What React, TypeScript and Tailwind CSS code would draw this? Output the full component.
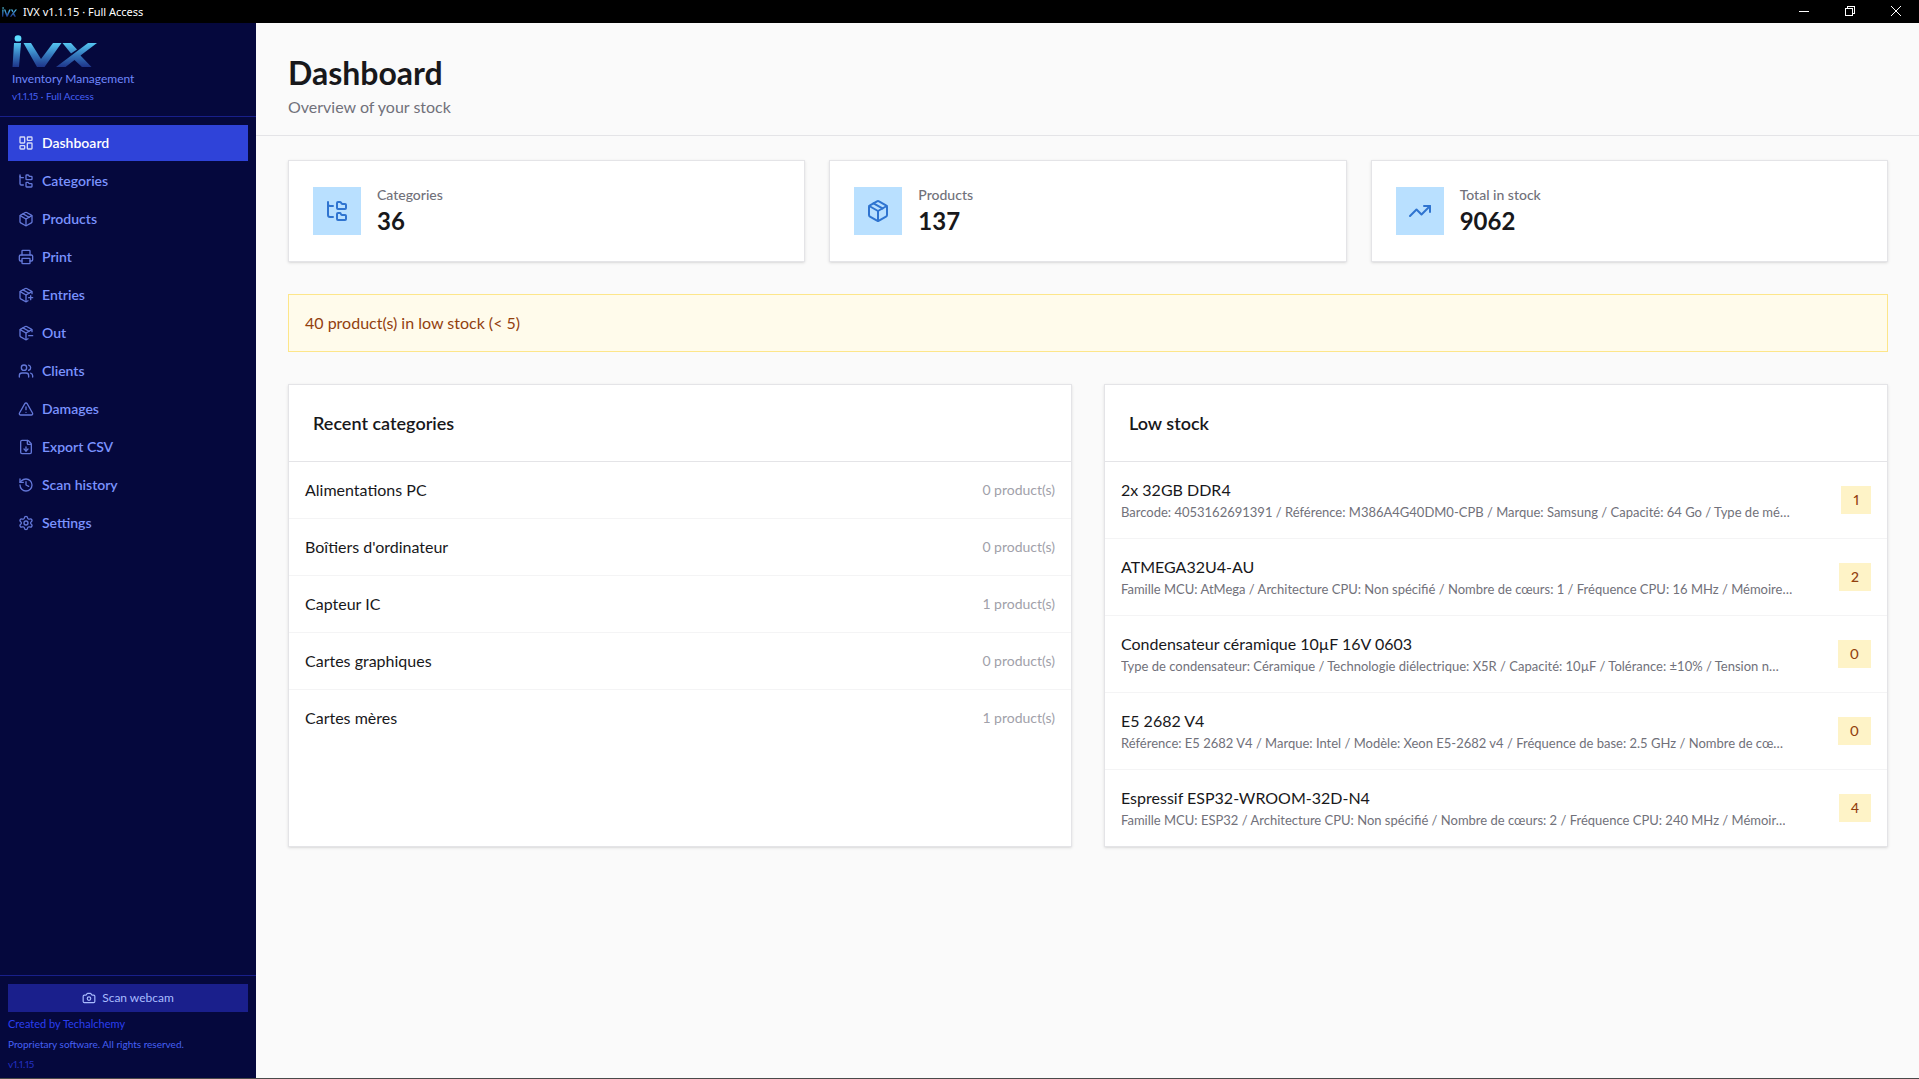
import React, { useState } from 'react';
import {
  AlertTriangle,
  Camera,
  FileDown,
  FolderTree,
  History,
  LayoutDashboard,
  Package,
  PackageMinus,
  PackagePlus,
  Printer,
  Settings,
  TrendingUp,
  Users,
} from 'lucide-react';

const navItems = [
  { label: 'Dashboard', icon: LayoutDashboard },
  { label: 'Categories', icon: FolderTree },
  { label: 'Products', icon: Package },
  { label: 'Print', icon: Printer },
  { label: 'Entries', icon: PackagePlus },
  { label: 'Out', icon: PackageMinus },
  { label: 'Clients', icon: Users },
  { label: 'Damages', icon: AlertTriangle },
  { label: 'Export CSV', icon: FileDown },
  { label: 'Scan history', icon: History },
  { label: 'Settings', icon: Settings },
];

const stats = [
  { label: 'Categories', value: 36, icon: FolderTree },
  { label: 'Products', value: 137, icon: Package },
  { label: 'Total in stock', value: 9062, icon: TrendingUp },
];

const categories = [
  { name: 'Alimentations PC', count: 0 },
  { name: "Boîtiers d'ordinateur", count: 0 },
  { name: 'Capteur IC', count: 1 },
  { name: 'Cartes graphiques', count: 0 },
  { name: 'Cartes mères', count: 1 },
];

const lowStock = [
  {
    name: '2x 32GB DDR4',
    details: 'Barcode: 4053162691391 / Référence: M386A4G40DM0-CPB / Marque: Samsung / Capacité: 64 Go / Type de mé…',
    qty: 1,
  },
  {
    name: 'ATMEGA32U4-AU',
    details: 'Famille MCU: AtMega / Architecture CPU: Non spécifié / Nombre de cœurs: 1 / Fréquence CPU: 16 MHz / Mémoire…',
    qty: 2,
  },
  {
    name: 'Condensateur céramique 10µF 16V 0603',
    details: 'Type de condensateur: Céramique / Technologie diélectrique: X5R / Capacité: 10µF / Tolérance: ±10% / Tension n…',
    qty: 0,
  },
  {
    name: 'E5 2682 V4',
    details: 'Référence: E5 2682 V4 / Marque: Intel / Modèle: Xeon E5-2682 v4 / Fréquence de base: 2.5 GHz / Nombre de cœ…',
    qty: 0,
  },
  {
    name: 'Espressif ESP32-WROOM-32D-N4',
    details: 'Famille MCU: ESP32 / Architecture CPU: Non spécifié / Nombre de cœurs: 2 / Fréquence CPU: 240 MHz / Mémoir…',
    qty: 4,
  },
];

function Logo({ id, className }: { id: string; className: string }) {
  return (
    <svg viewBox="0 0 85 33" preserveAspectRatio="none" className={className} role="img" aria-label="ivx">
      <defs>
        <linearGradient id={id} x1="0" y1="0" x2="0" y2="33" gradientUnits="userSpaceOnUse">
          <stop offset="0.15" stopColor="#5ddcff" />
          <stop offset="0.6" stopColor="#3579bd" />
          <stop offset="1" stopColor="#1c2f86" />
        </linearGradient>
      </defs>
      <g fill={`url(#${id})`}>
        <ellipse cx="6" cy="3.4" rx="3.4" ry="3.2" />
        <path d="M2 8H9L7 32H0.500Z" />
        <path d="M11.500 8H19L29 24L41 8H49.500L32.500 32H25Z" />
        <path d="M50.500 8H59L65 14.500L59 18.500Z" />
        <path d="M76 8H85L68.500 20.500L79.500 32H70L62.500 25L53.500 32H44Z" />
      </g>
    </svg>
  );
}

function TitleBar() {
  return (
    <div className="h-[23px] shrink-0 bg-black text-white flex items-center justify-between">
      <div className="flex items-center gap-1.5 pl-0.5">
        <Logo id="logo-small" className="w-[15px] h-2.5" />
        <span className="text-[11px] leading-4 font-['Noto_Sans',sans-serif]">IVX v1.1.15 · Full Access</span>
      </div>
      <div className="flex h-full pb-0.5">
        <button aria-label="Minimize" className="w-[46px] flex items-center justify-center">
          <svg width="10" height="10" viewBox="0 0 10 10" shapeRendering="crispEdges">
            <path d="M0 5.500H10" stroke="#fff" />
          </svg>
        </button>
        <button aria-label="Restore" className="w-[46px] flex items-center justify-center">
          <svg width="10" height="10" viewBox="0 0 10 10" fill="none" stroke="#fff" shapeRendering="crispEdges">
            <path d="M0.500 2.500H7.500V9.500H0.500Z" />
            <path d="M2.500 2.500V0.500H9.500V7.500H7.500" />
          </svg>
        </button>
        <button aria-label="Close" className="w-[46px] flex items-center justify-center">
          <svg width="10" height="10" viewBox="0 0 10 10" stroke="#fff">
            <path d="M0 0L10 10M10 0L0 10" />
          </svg>
        </button>
      </div>
    </div>
  );
}

function Sidebar() {
  const [active, setActive] = useState('Dashboard');

  return (
    <aside className="w-64 shrink-0 bg-[#05083d] flex flex-col">
      <div className="px-3 pt-3 pb-3 border-b border-[#181f8a]">
        <Logo id="logo-main" className="w-[85px] h-[33px]" />
        <p className="text-xs text-[#6e86fb] mt-[3px]">Inventory Management</p>
        <p className="text-[10px] leading-4 text-[#4560f5] mt-px proportional-nums">v1.1.15 · Full Access</p>
      </div>

      <nav className="flex-1 p-2 space-y-0.5">
        {navItems.map(({ label, icon: Icon }) => (
          <button
            key={label}
            onClick={() => setActive(label)}
            className={`w-full h-9 px-2.5 flex items-center gap-2 text-sm font-semibold ${
              active === label ? 'bg-[#2f43d9] text-white' : 'text-[#7b93ff]'
            }`}
          >
            <Icon size={16} className="opacity-80" />
            {label}
          </button>
        ))}
      </nav>

      <div className="border-t border-[#181f8a] px-2 pt-2 pb-1.5">
        <button className="w-full h-7 bg-[#1a1f8c] text-[#a9bcff] text-xs flex items-center justify-center gap-1.5">
          <Camera size={14} />
          Scan webcam
        </button>
        <p className="text-[11px] leading-4 text-[#2a3ff0] mt-1">Created by Techalchemy</p>
        <p className="text-[10px] leading-4 text-[#4560f5] mt-1">Proprietary software. All rights reserved.</p>
        <p className="text-[10px] leading-4 text-[#2431c4] mt-1 proportional-nums">v1.1.15</p>
      </div>
    </aside>
  );
}

export default function App() {
  return (
    <div className="h-screen flex flex-col font-[Lato,sans-serif] text-[#18181b]">
      <TitleBar />
      <div className="flex flex-1 min-h-0">
        <Sidebar />

        <main className="flex-1 min-w-0 bg-[#fafafa] overflow-auto">
          <header className="px-8 pt-8 pb-4 border-b border-[#e4e4e7]">
            <h1 className="text-[32px] leading-9 font-bold">Dashboard</h1>
            <p className="text-[#71717a] mt-1">Overview of your stock</p>
          </header>

          <div className="pl-8 pr-[31px] py-6 space-y-8">
            <div className="grid grid-cols-3 gap-6">
              {stats.map(({ label, value, icon: Icon }) => (
                <div key={label} className="bg-white border border-[#e4e4e7] shadow-sm p-6 flex items-center gap-4">
                  <div className="w-12 h-12 bg-[#b9e0ff] text-[#2f74d0] flex items-center justify-center">
                    <Icon size={24} />
                  </div>
                  <div>
                    <p className="text-sm font-medium text-[#71717a]">{label}</p>
                    <p className="text-2xl font-bold">{value}</p>
                  </div>
                </div>
              ))}
            </div>

            <div className="bg-[#fffbeb] border border-[#fde68a] p-4 text-[#92400e]">
              40 product(s) in low stock (&lt; 5)
            </div>

            <div className="grid grid-cols-2 gap-8">
              <section className="bg-white border border-[#e4e4e7] shadow-sm">
                <h2 className="p-6 border-b border-[#e4e4e7] text-lg leading-7 font-semibold">Recent categories</h2>
                <ul className="divide-y divide-[#f4f4f5]">
                  {categories.map((c) => (
                    <li key={c.name} className="p-4 flex items-center justify-between">
                      <span>{c.name}</span>
                      <span className="text-sm text-[#a1a1aa]">{c.count} product(s)</span>
                    </li>
                  ))}
                </ul>
              </section>

              <section className="bg-white border border-[#e4e4e7] shadow-sm min-w-0">
                <h2 className="p-6 border-b border-[#e4e4e7] text-lg leading-7 font-semibold">Low stock</h2>
                <ul className="divide-y divide-[#f4f4f5]">
                  {lowStock.map((p) => (
                    <li key={p.name} className="p-4 flex items-center justify-between gap-2">
                      <div className="min-w-0">
                        <p className="truncate">{p.name}</p>
                        <p className="text-[13px] leading-5 text-[#71717a] truncate">{p.details}</p>
                      </div>
                      <span className="shrink-0 px-3 py-1 text-sm font-medium bg-[#fef3c7] text-[#92400e] proportional-nums">
                        {p.qty}
                      </span>
                    </li>
                  ))}
                </ul>
              </section>
            </div>
          </div>
        </main>
      </div>
      <div className="h-px shrink-0 bg-[#4a4a4a]" />
    </div>
  );
}
